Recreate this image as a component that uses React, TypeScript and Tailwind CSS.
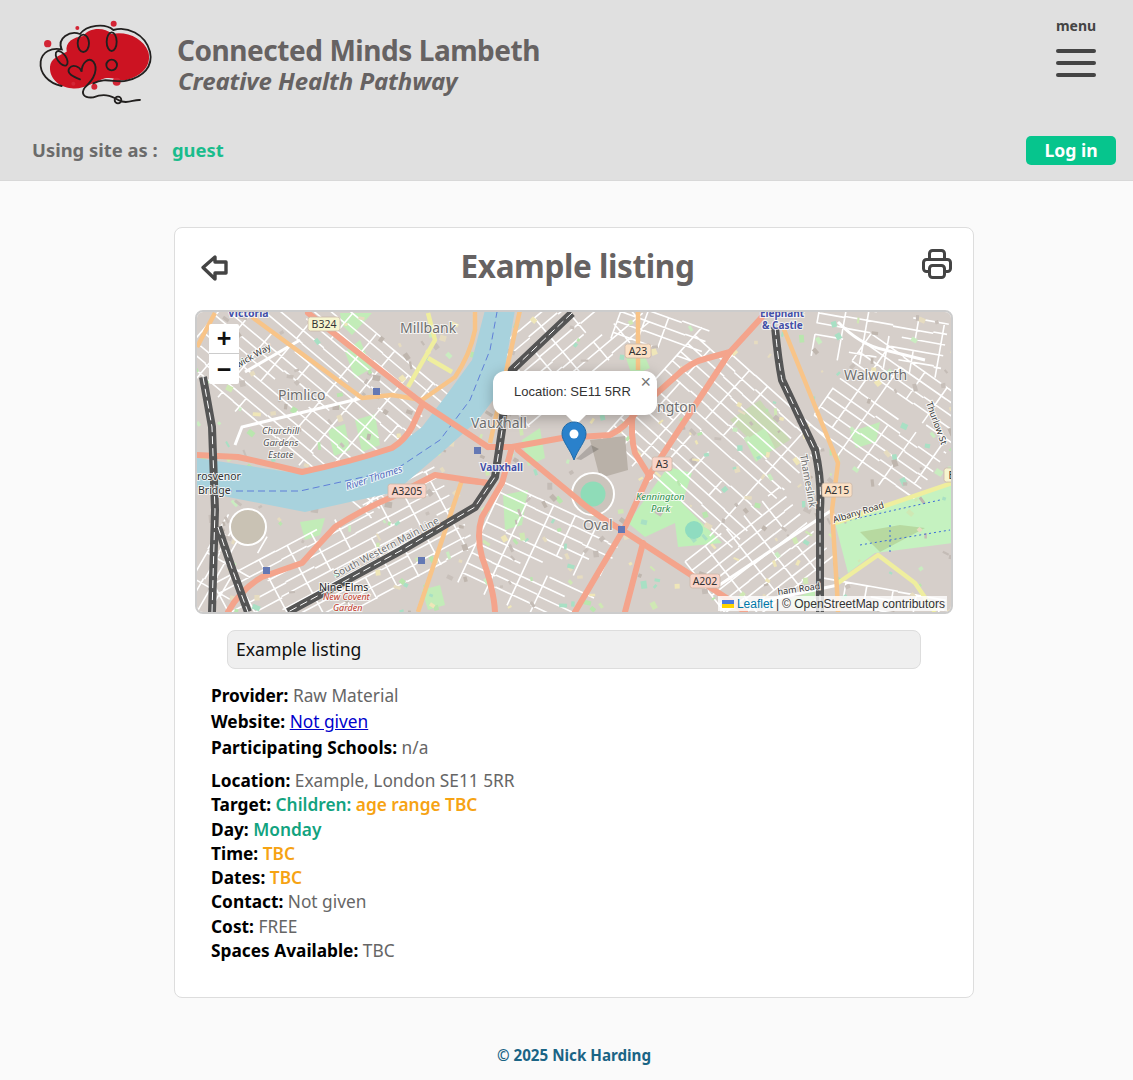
import { useMemo } from "react";

const ubuntu = "font-['Noto_Sans','Open_Sans',sans-serif]";

function rng(seed: number) {
  let s = seed;
  return () => {
    s = (s * 1664525 + 1013904223) % 4294967296;
    return s / 4294967296;
  };
}

type Sector = [number, number, number, number, number, number, number];

// cx, cy, angle, length, width, row gap, cross gap
const sectors: Sector[] = [
  [320, 385, 40, 250, 150, 11, 22],
  [225, 570, -60, 100, 50, 11, 20],
  [345, 565, -28, 250, 90, 11, 22],
  [540, 560, 25, 130, 110, 11, 20],
  [565, 345, -40, 160, 80, 11, 20],
  [715, 440, 42, 170, 150, 11, 20],
  [760, 560, -38, 120, 90, 11, 20],
  [890, 420, 35, 130, 120, 11, 20],
  [880, 340, 10, 130, 55, 11, 20],
  [660, 335, 20, 90, 40, 11, 20],
  [880, 600, 10, 130, 24, 11, 20],
];

function streets(list: Sector[]) {
  const r = rng(7);
  let d = "";
  for (const [cx, cy, a, len, wid, gapA, gapB] of list) {
    const t = (a * Math.PI) / 180;
    const c = Math.cos(t);
    const s = Math.sin(t);
    const pt = (u: number, v: number) =>
      `${(cx + u * c - v * s).toFixed(1)} ${(cy + u * s + v * c).toFixed(1)}`;
    for (let v = -wid / 2; v < wid / 2; v += gapA) {
      let u = -len / 2;
      while (u < len / 2) {
        const run = 22 + r() * 50;
        const jit = (r() - 0.5) * 2;
        if (r() < 0.86) d += `M${pt(u, v + jit)}L${pt(Math.min(u + run, len / 2), v + jit)}`;
        u += run;
      }
    }
    for (let u = -len / 2; u < len / 2; u += gapB + r() * 10) {
      let v = -wid / 2;
      while (v < wid / 2) {
        const run = gapA * (1 + Math.floor(r() * 3));
        if (r() < 0.75) d += `M${pt(u, v)}L${pt(u, Math.min(v + run, wid / 2))}`;
        v += run;
      }
    }
  }
  return d;
}

function patches(n: number, seed: number) {
  const r = rng(seed);
  const out: { x: number; y: number; w: number; h: number; a: number; f: string }[] = [];
  const fills = ["#b9e6ae", "#c9ecc0", "#a8e0c4", "#c8c0ba", "#bfb6ae", "#e6dcc0", "#cfe8b4", "#c4bcb6", "#efe6b8"];
  for (let i = 0; i < n; i++) {
    out.push({
      x: 197 + r() * 755,
      y: 312 + r() * 300,
      w: 2 + r() * 6,
      h: 2 + r() * 4,
      a: r() * 90,
      f: fills[Math.floor(r() * fills.length)],
    });
  }
  return out;
}

const pink = [
  "M308 313L422 403L488 447",
  "M197 455L238 457Q270 464 302 472Q350 462 392 448Q405 440 412 427L422 405",
  "M228 612Q240 590 262 577L302 563Q318 545 335 527Q365 508 392 497L435 475L488 483",
  "M512 447L502 483L482 517Q476 535 482 557Q494 590 495 612",
  "M488 447L512 447L562 438L610 435Q625 428 638 410L675 377Q690 362 708 358L730 352L762 317",
  "M730 352L692 410L648 477L625 527L575 612",
  "M518 450L575 497Q595 515 622 530L642 543L688 573L725 597L745 612",
  "M643 543L625 612",
  "M633 410Q630 435 635 453L650 477",
  "M462 480L488 483",
];
const orange = [
  "M252 317L362 398L392 395L422 400L455 377Q470 355 475 330L475 310",
  "M520 310L490 443",
  "M462 480L418 612",
  "M197 347L215 313",
  "M638 310L638 370",
  "M783 327L838 463L832 510L837 590L838 612",
];
const yellow = [
  "M428 313L435 340L408 387",
  "M428 358L452 372",
  "M835 523L952 483",
  "M838 583L878 555L915 583L935 612",
];
const rail = [
  "M203 377L212 427L215 510L212 612",
  "M218 527Q232 570 248 612",
  "M572 313L512 370Q504 395 502 430L495 477L475 507L402 550L288 612",
  "M775 327Q778 360 782 380L815 450Q822 480 820 510L820 612",
];
const wide = [
  "M235 445L242 427L362 398",
  "M838 322Q860 345 885 350L925 360",
  "M712 590L832 510",
  "M300 340L245 372",
  "M720 610L838 585",
];
const blocks = [
  "M340 313H372L352 335L342 325Z",
  "M328 430L345 424L350 450L334 456Z",
  "M355 420L375 414L380 445L362 452Z",
  "M345 352L360 340L372 368L355 378Z",
  "M503 495L528 490L522 525L505 530Z",
  "M522 440L540 428L545 458L528 466Z",
  "M745 440L765 428L775 448L756 462Z",
  "M850 432L880 422L876 442L856 448Z",
  "M625 355L640 345L650 368L632 376Z",
  "M790 600L815 590L815 607L795 610Z",
  "M422 590L440 585L445 605L428 610Z",
  "M300 522L325 518L320 535L305 540Z",
];

function MapLabel(props: {
  x: number;
  y: number;
  size?: number;
  fill?: string;
  bold?: boolean;
  italic?: boolean;
  rotate?: number;
  children: string;
}) {
  const { x, y, size = 14, fill = "#6f6f6f", bold, italic, rotate, children } = props;
  return (
    <text
      x={x}
      y={y}
      fontSize={size}
      fill={fill}
      fontFamily="'Noto Sans', sans-serif"
      fontWeight={bold ? 700 : 400}
      fontStyle={italic ? "italic" : "normal"}
      stroke="#ffffff"
      strokeOpacity={0.75}
      strokeWidth={2}
      paintOrder="stroke"
      transform={rotate ? `rotate(${rotate} ${x} ${y})` : undefined}
    >
      {children}
    </text>
  );
}

function Shield({ x, y, w, label, yellowish }: { x: number; y: number; w: number; label: string; yellowish?: boolean }) {
  return (
    <g>
      <rect
        x={x}
        y={y}
        width={w}
        height={14}
        rx={2.5}
        fill={yellowish ? "#f6f5cf" : label === "A215" || label === "A23" ? "#fbe0c4" : "#f9d4c8"}
        stroke="#cbb8a8"
        strokeWidth={0.8}
      />
      <text
        x={x + w / 2}
        y={y + 10.5}
        fontSize={10.5}
        textAnchor="middle"
        fill="#333333"
        fontFamily="'Noto Sans', sans-serif"
      >
        {label}
      </text>
    </g>
  );
}

function MapArt() {
  const streetPath = useMemo(() => streets(sectors), []);
  const bits = useMemo(() => patches(420, 11), []);
  return (
    <svg viewBox="197 312 754 300" className="block h-full w-full">
      <rect x="190" y="305" width="770" height="315" fill="#d6cfca" />
      <path d="M668 467L692 473L682 503L722 543L678 547L675 523L645 537L628 523Z" fill="#bff0b8" />
      <path d="M835 523L952 483V543L875 553L848 573Z" fill="#c5f2c0" />
      <path d="M860 532L900 525L925 528L880 552Z" fill="#b7d9a0" />
      <path d="M730 420L760 400L790 440L765 455Z" fill="#c9d9b4" />
      {blocks.map((d) => (
        <path key={d} d={d} fill="#c2ecb8" />
      ))}
      <path d={streetPath} fill="none" stroke="#ffffff" strokeWidth={1.6} />
      {bits.map((b, i) => (
        <rect
          key={i}
          x={b.x}
          y={b.y}
          width={b.w}
          height={b.h}
          fill={b.f}
          transform={`rotate(${b.a} ${b.x} ${b.y})`}
        />
      ))}
      <path d="M590 440L625 436L628 470L600 478Z" fill="#b9b1a8" />
      <circle cx="694" cy="530" r="9" fill="#8fdcc0" />
      <circle cx="593" cy="494" r="21" fill="#cbc4bc" stroke="#ffffff" strokeWidth={2} />
      <circle cx="593" cy="494" r="12.5" fill="#8fdcb8" />
      <circle cx="248" cy="527" r="18" fill="#c9c2b4" stroke="#ffffff" strokeWidth={2} />
      <path d="M850 520L940 500M860 545L950 530M890 525V555" fill="none" stroke="#3a6ad8" strokeWidth={1} strokeDasharray="2 3" />
      {/* river */}
      <path
        d="M197 458L295 473L392 450L422 427L445 397L472 360L485 310H515L505 367L497 395L478 420L448 447L395 492L305 512L228 497L197 487Z"
        fill="#a8d2dd"
      />
      <path
        d="M225 491L300 491L395 470L440 440L470 400L490 350L497 312"
        fill="none"
        stroke="#5f7fd8"
        strokeWidth={1}
        strokeDasharray="7 4"
      />
      {/* roads */}
      {wide.map((d) => (
        <path key={d} d={d} fill="none" stroke="#ffffff" strokeWidth={3} />
      ))}
      {yellow.map((d) => (
        <path key={d} d={d} fill="none" stroke="#efee9e" strokeWidth={4.5} strokeLinejoin="round" />
      ))}
      {orange.map((d) => (
        <path key={d} d={d} fill="none" stroke="#f8c488" strokeWidth={4.5} strokeLinejoin="round" />
      ))}
      {pink.map((d) => (
        <path key={d} d={d} fill="none" stroke="#f4a48c" strokeWidth={6} strokeLinejoin="round" strokeLinecap="round" />
      ))}
      {rail.map((d) => (
        <g key={d}>
          <path d={d} fill="none" stroke="#555555" strokeWidth={8} strokeLinejoin="round" />
          <path d={d} fill="none" stroke="#ffffff" strokeWidth={1} strokeDasharray="8 4" />
        </g>
      ))}
      {/* stations */}
      <rect x="373" y="388" width="7" height="7" fill="#6478b4" />
      <rect x="474" y="447" width="7" height="7" fill="#6478b4" />
      <rect x="618" y="526" width="7" height="7" fill="#6478b4" />
      <rect x="418" y="557" width="7" height="7" fill="#6478b4" />
      <rect x="263" y="567" width="7" height="7" fill="#6478b4" />
      {/* labels */}
      <MapLabel x={228} y={317} size={10.5} fill="#4450a8" bold>Victoria</MapLabel>
      <MapLabel x={400} y={333} size={14}>Millbank</MapLabel>
      <MapLabel x={278} y={400} size={14}>Pimlico</MapLabel>
      <MapLabel x={262} y={434} size={9.5} italic fill="#555555">Churchill</MapLabel>
      <MapLabel x={263} y={446} size={9.5} italic fill="#555555">Gardens</MapLabel>
      <MapLabel x={268} y={458} size={9.5} italic fill="#555555">Estate</MapLabel>
      <MapLabel x={471} y={428} size={14}>Vauxhall</MapLabel>
      <MapLabel x={480} y={471} size={10} fill="#4450a8" bold>Vauxhall</MapLabel>
      <MapLabel x={197} y={480} size={10.5} fill="#333333">rosvenor</MapLabel>
      <MapLabel x={198} y={494} size={10.5} fill="#333333">Bridge</MapLabel>
      <MapLabel x={347} y={490} size={10} italic fill="#5570c0" rotate={-18}>River Thames</MapLabel>
      <MapLabel x={336} y={578} size={10} rotate={-28}>South Western Main Line</MapLabel>
      <MapLabel x={319} y={591} size={10.5} fill="#222222">Nine Elms</MapLabel>
      <MapLabel x={323} y={600} size={9} italic fill="#c0392b">New Covent</MapLabel>
      <MapLabel x={333} y={611} size={9} italic fill="#c0392b">Garden</MapLabel>
      <MapLabel x={844} y={380} size={14}>Walworth</MapLabel>
      <MapLabel x={657} y={412} size={14}>ngton</MapLabel>
      <MapLabel x={583} y={530} size={14}>Oval</MapLabel>
      <MapLabel x={636} y={500} size={9.5} italic fill="#2f8f4e">Kennington</MapLabel>
      <MapLabel x={651} y={512} size={9.5} italic fill="#2f8f4e">Park</MapLabel>
      <MapLabel x={834} y={523} size={9} fill="#333333" rotate={-17}>Albany Road</MapLabel>
      <MapLabel x={800} y={455} size={10} rotate={80}>Thameslink</MapLabel>
      <MapLabel x={926} y={403} size={9} fill="#333333" rotate={70}>Thurlow St</MapLabel>
      <MapLabel x={238} y={368} size={9} fill="#333333" rotate={-30}>wick Way</MapLabel>
      <MapLabel x={778} y={595} size={9} fill="#333333" rotate={-8}>ham Road</MapLabel>
      <MapLabel x={760} y={317} size={10} fill="#4450a8" bold>Elephant</MapLabel>
      <MapLabel x={762} y={329} size={10} fill="#4450a8" bold>& Castle</MapLabel>
      <Shield x={308} y={317} w={32} label="B324" yellowish />
      <Shield x={388} y={484} w={38} label="A3205" />
      <Shield x={625} y={344} w={26} label="A23" />
      <Shield x={652} y={457} w={20} label="A3" />
      <Shield x={822} y={483} w={30} label="A215" />
      <Shield x={690} y={574} w={30} label="A202" />
      <Shield x={944} y={468} w={16} label="B" yellowish />
    </svg>
  );
}

function MapBox() {
  return (
    <div className="relative mx-auto h-[304px] w-[758px] overflow-hidden rounded-lg border-2 border-[#cccccc]">
      <MapArt />
      {/* zoom control */}
      <div className="absolute left-[12px] top-[12px] flex w-[30px] flex-col overflow-hidden rounded-[2px] bg-white font-['Liberation_Sans',sans-serif] text-[#111111]">
        <div className="flex h-[30px] items-center justify-center border-b border-[#cccccc] text-[25px] font-bold leading-none">+</div>
        <div className="flex h-[30px] items-center justify-center text-[25px] font-bold leading-none">−</div>
      </div>
      {/* popup */}
      <div className="absolute left-[296px] top-[59px] h-[44px] w-[164px] rounded-xl bg-white pl-[21px] pt-[12px] font-['Liberation_Sans',sans-serif] text-[13px] leading-[17px] text-[#333333] shadow-[0_3px_14px_rgba(0,0,0,0.25)]">
        Location: SE11 5RR
        <span className="absolute right-[6px] top-[1px] text-[18px] leading-[20px] text-[#757575]">×</span>
      </div>
      <div className="absolute left-[369px] top-[103px] h-0 w-0 border-x-[10px] border-t-[10px] border-x-transparent border-t-white" />
      {/* marker */}
      <svg className="absolute left-[364px] top-[109px]" width="46" height="42" viewBox="0 0 46 42">
        <path d="M15 38L30 24L38 28L20 39Z" fill="#000000" opacity="0.18" />
        <path d="M13 1C6 1 1 6 1 13C1 20 9 28 13 39C17 28 25 20 25 13C25 6 20 1 13 1Z" fill="#2a81cb" stroke="#1f6aa8" strokeWidth="1" />
        <circle cx="13" cy="13" r="4.5" fill="#ffffff" />
      </svg>
      {/* attribution */}
      <div className="absolute bottom-[1px] right-[4px] flex h-[15px] items-center gap-[3px] bg-white/80 pl-[4px] pr-[2px] font-['Liberation_Sans',sans-serif] text-[12px] text-[#333333]">
        <svg width="12" height="8" viewBox="0 0 12 8">
          <rect width="12" height="4" fill="#4C7BE1" />
          <rect y="4" width="12" height="4" fill="#FFD500" />
        </svg>
        <span className="text-[#0078a8]">Leaflet</span>
        <span>|</span>
        <span>© OpenStreetMap contributors</span>
      </div>
    </div>
  );
}

function Logo() {
  return (
    <svg viewBox="0 0 390 300" className="h-[100px] w-[130px] shrink-0 blur-[0.4px]">
      <path
        d="M60 170C62 145 85 138 110 125C105 95 130 82 160 78C175 52 225 50 245 72C290 62 340 85 355 125C365 165 340 195 290 210C265 215 250 200 225 205C195 215 160 240 125 235C85 230 58 205 60 170Z"
        fill="#cc1322"
      />
      <circle cx="53" cy="101" r="11" fill="#d32535" />
      <circle cx="142" cy="54" r="6" fill="#d32535" />
      <circle cx="251" cy="41" r="9" fill="#d32535" />
      <circle cx="130" cy="221" r="6" fill="#d32535" />
      <circle cx="193" cy="230" r="9" fill="#d32535" />
      <circle cx="260" cy="215" r="12" fill="#d32535" />
      <g fill="none" stroke="#22201f" strokeWidth="5.5" strokeLinecap="round">
        <path d="M95 228C55 220 28 190 32 155C36 125 65 112 95 118C80 85 120 60 150 72C170 45 225 38 250 60C290 48 345 70 360 125C370 170 340 200 290 212C260 220 225 200 190 220" />
        <ellipse cx="160" cy="100" rx="17" ry="26" />
        <ellipse cx="245" cy="95" rx="15" ry="28" />
        <ellipse cx="95" cy="145" rx="13" ry="25" transform="rotate(-35 95 145)" />
        <ellipse cx="245" cy="165" rx="16" ry="16" />
        <path d="M150 208C130 200 108 190 118 175C128 160 150 170 155 185C155 160 175 140 190 155C205 175 195 205 165 232C152 250 160 265 190 262C220 250 240 255 265 270C290 285 310 268 330 270" />
        <circle cx="264" cy="270" r="10" />
      </g>
    </svg>
  );
}

function Row({ label, children }: { label: string; children: React.ReactNode }) {
  return (
    <div>
      <span className="font-bold text-black">{label}</span> {children}
    </div>
  );
}

export default function App() {
  return (
    <div className={`min-h-[1080px] bg-[#fafafa] ${ubuntu}`}>
      <header className="h-[181px] border-b border-[#d8d8d8] bg-[#e0e0e0]">
        <div className="flex h-[120px] pl-[30px] pt-[10px]">
          <Logo />
          <div className="ml-[17px] pt-[23px] text-[#666262]">
            <div className="text-[28px] font-bold leading-[35px] tracking-[-0.45px]">Connected Minds Lambeth</div>
            <div className="pl-[1px] text-[24px] font-bold italic leading-[26px] tracking-[-0.1px]">Creative Health Pathway</div>
          </div>
          <div className="ml-auto mr-[37px] flex w-[40px] flex-col items-center pt-[6px]">
            <div className="text-[14px] font-bold leading-[20px] text-[#444444]">menu</div>
            <div className="mt-[13px] h-[4px] w-[40px] rounded-full bg-[#444444]" />
            <div className="mt-[8px] h-[4px] w-[40px] rounded-full bg-[#444444]" />
            <div className="mt-[8px] h-[4px] w-[40px] rounded-full bg-[#444444]" />
          </div>
        </div>
        <div className="mt-[16px] flex h-[29px] items-center pl-[32px] pr-[17px] text-[18.4px] font-bold">
          <span className="-mt-[2px] w-[140px] text-[#6b6b6b]">Using site as :</span>
          <span className="-mt-[2px] text-[#1abc8c]">guest</span>
          <button className="ml-auto flex h-[29px] w-[90px] items-center justify-center rounded-[5px] bg-[#06c58d] text-[17.6px] font-bold text-white">
            Log in
          </button>
        </div>
      </header>

      <main className="ml-[174px] mt-[46px] h-[771px] w-[800px] rounded-lg border border-[#dddddd] bg-white">
        <div className="relative flex h-[82px] items-start justify-center">
          <svg className="absolute left-[25px] top-[25px]" width="30" height="30" viewBox="0 0 30 30" fill="none" stroke="#444444" strokeWidth="3.4" strokeLinejoin="round">
            <path d="M3 14.5L15 4V9H26V20H15V26Z" />
          </svg>
          <h1 className="ml-[7px] mt-[16px] text-[31.5px] font-bold leading-[44px] tracking-[-0.4px] text-[#666262]">Example listing</h1>
          <svg className="absolute right-[18px] top-[18px]" width="36" height="36" viewBox="0 0 24 24" fill="none" stroke="#444444" strokeWidth="2" strokeLinecap="round" strokeLinejoin="round">
            <path d="M17 17h2a2 2 0 0 0 2 -2v-4a2 2 0 0 0 -2 -2h-14a2 2 0 0 0 -2 2v4a2 2 0 0 0 2 2h2" />
            <path d="M17 9v-4a2 2 0 0 0 -2 -2h-6a2 2 0 0 0 -2 2v4" />
            <rect x="7" y="13" width="10" height="8" rx="2" />
          </svg>
        </div>
        <MapBox />
        <div className="ml-[52px] mt-[16px] flex h-[39px] w-[694px] items-center rounded-lg border border-[#dddddd] bg-[#efefef] pl-[8px] text-[17.6px] text-[#111111]">
          Example listing
        </div>
        <div className="ml-[36px] mt-[14px] text-[17.3px] leading-[26px] text-[#666666]">
          <Row label="Provider:">Raw Material</Row>
          <Row label="Website:">
            <a href="#" className="text-[#0000cc] underline">Not given</a>
          </Row>
          <Row label="Participating Schools:">n/a</Row>
        </div>
        <div className="ml-[36px] mt-[8px] text-[17.3px] leading-[24.3px] text-[#666666]">
          <Row label="Location:">Example, London SE11 5RR</Row>
          <Row label="Target:">
            <span className="font-semibold text-[#12a37f]">Children:</span>{" "}
            <span className="font-semibold text-[#f6a313]">age range TBC</span>
          </Row>
          <Row label="Day:"><span className="font-semibold text-[#12a37f]">Monday</span></Row>
          <Row label="Time:"><span className="font-semibold text-[#f6a313]">TBC</span></Row>
          <Row label="Dates:"><span className="font-semibold text-[#f6a313]">TBC</span></Row>
          <Row label="Contact:">Not given</Row>
          <Row label="Cost:">FREE</Row>
          <Row label="Spaces Available:">TBC</Row>
        </div>
      </main>

      <footer className="mt-[47px] w-[1148px] text-center text-[15.2px] font-bold leading-[20px] text-[#1a6485]">
        © 2025 Nick Harding
      </footer>
    </div>
  );
}
